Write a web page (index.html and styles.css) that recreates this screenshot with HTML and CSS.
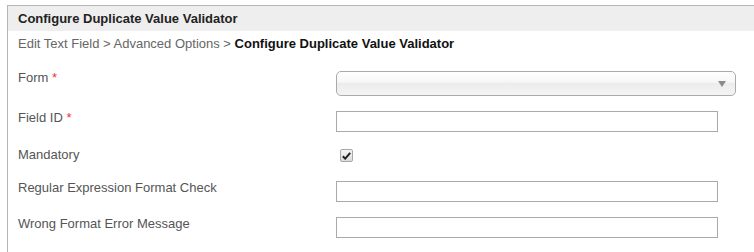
FILE: index.html
```html
<!DOCTYPE html>
<html lang="en">
<head>
  <meta charset="UTF-8">
  <title>Configure Duplicate Value Validator</title>
  <link rel="stylesheet" href="styles.css">
</head>
<body>
  <div class="panel">
    <!-- Title bar -->
    <div class="panel-header">Configure Duplicate Value Validator</div>

    <!-- Breadcrumb -->
    <div class="breadcrumb">
      Edit Text Field &gt; Advanced Options &gt; <strong>Configure Duplicate Value Validator</strong>
    </div>

    <!-- Form -->
    <div class="form">
      <label class="form-label">Form <span class="req">*</span></label>
      <div class="form-field">
        <div class="select-wrap">
          <select class="select"></select>
          <svg class="select-arrow" width="8" height="6" viewBox="0 0 8 6">
            <path d="M0 0 H8 L4 6 Z" fill="#8a8a8a"/>
          </svg>
        </div>
      </div>

      <label class="form-label">Field ID <span class="req">*</span></label>
      <div class="form-field"><input class="text" type="text"></div>

      <label class="form-label">Mandatory</label>
      <div class="form-field">
        <span class="checkbox">
          <svg width="9" height="8" viewBox="0 0 9 8">
            <path d="M0.8 4.2 L3.2 6.6 L8.2 0.8" fill="none" stroke="#222" stroke-width="2"/>
          </svg>
        </span>
      </div>

      <label class="form-label">Regular Expression Format Check</label>
      <div class="form-field"><input class="text" type="text"></div>

      <label class="form-label">Wrong Format Error Message</label>
      <div class="form-field"><input class="text" type="text"></div>
    </div>
  </div>
</body>
</html>
```

FILE: styles.css
```css
* {
  box-sizing: border-box;
}

html, body {
  overflow: hidden;
}

body {
  margin: 5px 0 0 7px;
  font-family: "Liberation Sans", Arial, sans-serif;
  font-size: 13px;
  color: #555;
  background: #fff;
}

/* Panel runs past the right and bottom edges of the window */
.panel {
  width: 780px;
  height: 247px;
  border: 1px solid #b5b5b5;
  border-bottom: 0;
}

.panel-header {
  height: 25px;
  line-height: 25px;
  padding-left: 10px;
  background: #eeeeee;
  font-weight: bold;
  color: #222;
}

.breadcrumb {
  padding: 5px 0 0 10px;
  line-height: 16px;
  color: #666;
}

.breadcrumb strong {
  color: #111;
}

/* Label / field grid */
.form {
  display: grid;
  grid-template-columns: 318px 1fr;
  grid-template-rows: 40px 37px 33px 36px 36px;
  margin-top: 18px;
  padding-left: 10px;
}

.form-label {
  line-height: 16px;
}

.req {
  color: #e33;
}

.form-field {
  padding-top: 1px;
}

.select-wrap {
  position: relative;
  width: 400px;
  height: 25px;
}

.select {
  appearance: none;
  -webkit-appearance: none;
  width: 100%;
  height: 100%;
  margin: 0;
  border: 1px solid #aaa;
  border-radius: 5px;
  background: linear-gradient(#ffffff, #f6f6f6 45%, #ececec 50%, #f4f4f4);
}

.select-arrow {
  position: absolute;
  top: 10px;
  right: 10px;
}

.text {
  display: block;
  width: 382px;
  height: 21px;
  margin: 0;
  border: 1px solid #aaa;
  background: #fff;
}

.checkbox {
  display: flex;
  align-items: center;
  justify-content: center;
  width: 13px;
  height: 13px;
  margin: 1px 0 0 4px;
  border: 1px solid #a8a8a8;
  border-radius: 2px;
  background: linear-gradient(#f4f4f4, #dcdcdc);
}
```
